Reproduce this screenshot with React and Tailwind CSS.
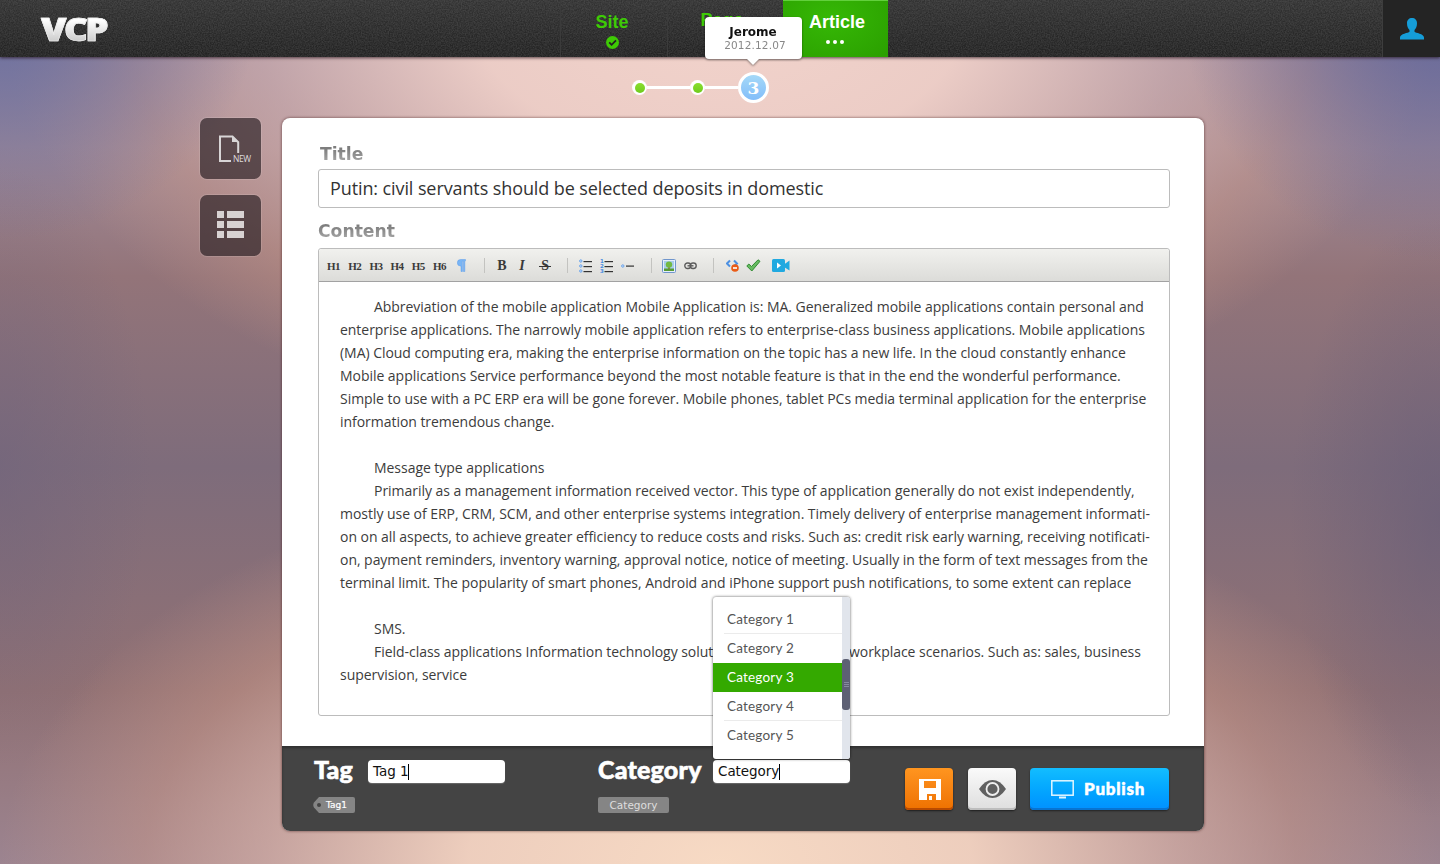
import React from "react";

const BODY = "font-['Open_Sans',sans-serif]";

const LINES = [
  [1, "Abbreviation of the mobile application Mobile Application is: MA. Generalized mobile applications contain personal and"],
  [0, "enterprise applications. The narrowly mobile application refers to enterprise-class business applications. Mobile applications"],
  [0, "(MA) Cloud computing era, making the enterprise information on the topic has a new life. In the cloud constantly enhance"],
  [0, "Mobile applications Service performance beyond the most notable feature is that in the end the wonderful performance."],
  [0, "Simple to use with a PC ERP era will be gone forever. Mobile phones, tablet PCs media terminal application for the enterprise"],
  [0, "information tremendous change."],
  [0, ""],
  [1, "Message type applications"],
  [1, "Primarily as a management information received vector. This type of application generally do not exist independently,"],
  [0, "mostly use of ERP, CRM, SCM, and other enterprise systems integration. Timely delivery of enterprise management informati-"],
  [0, "on on all aspects, to achieve greater efficiency to reduce costs and risks. Such as: credit risk early warning, receiving notificati-"],
  [0, "on, payment reminders, inventory warning, approval notice, notice of meeting. Usually in the form of text messages from the"],
  [0, "terminal limit. The popularity of smart phones, Android and iPhone support push notifications, to some extent can replace"],
  [0, ""],
  [1, "SMS."],
  [1, "Field-class applications Information technology solut", "workplace scenarios. Such as: sales, business"],
  [0, "supervision, service"],
];

function Noise() {
  return (
    <svg className="absolute inset-0 h-full w-full opacity-[0.13]" aria-hidden="true">
      <filter id="grain">
        <feTurbulence type="fractalNoise" baseFrequency="0.75" numOctaves="2" seed="4" />
        <feColorMatrix values="0 0 0 0 0.5  0 0 0 0 0.5  0 0 0 0 0.5  1.6 1.6 0 0 -1.1" />
      </filter>
      <rect width="100%" height="100%" filter="url(#grain)" />
    </svg>
  );
}

function Header() {
  return (
    <header className="relative flex h-[57px] bg-linear-to-b from-[#333333] to-[#222222] shadow-[0_1px_3px_rgba(30,10,20,0.7)]">
      <Noise />
      <div className="relative flex w-[560px] items-center pl-[41px]">
        <span className="origin-left scale-x-[1.15] bg-linear-to-b from-white from-30% to-[#cfcfcf] to-75% bg-clip-text pr-[4px] font-['Open_Sans',sans-serif] text-[32px] leading-[44px] font-extrabold tracking-[-2.2px] text-transparent [-webkit-text-stroke:0.7px_#ececec]">
          VCP
        </span>
      </div>
      <nav className="relative flex font-['Liberation_Sans',sans-serif] text-[18px] leading-[20px] font-bold text-[#3ecb05]">
        <div className="flex w-[107px] flex-col items-center border-l border-[#3b3b3b] pt-[12px] pr-[4px]">
          <span>Site</span>
          <svg className="mt-[4px]" width="13" height="13" viewBox="0 0 13 13">
            <circle cx="6.5" cy="6.5" r="6.5" fill="#3ecb05" />
            <path d="M3.2 6.4 5.6 8.8 10 4.3" fill="none" stroke="#222" strokeWidth="1.8" />
          </svg>
        </div>
        <div className="flex w-[116px] flex-col items-center border-l border-[#3b3b3b] pt-[10px] pr-[7px]">
          <span>Page</span>
        </div>
        <div className="flex w-[105px] flex-col items-center border-t border-[#62d03c] bg-[radial-gradient(ellipse_at_45%_30%,#36b806,#2ba000_95%)] pt-[11px] text-white">
          <span className="pl-[3px]">Article</span>
          <div className="mt-[8px] flex gap-[3px] pr-px">
            <i className="size-[4px] rounded-full bg-white" />
            <i className="size-[4px] rounded-full bg-white" />
            <i className="size-[4px] rounded-full bg-white" />
          </div>
        </div>
      </nav>
      <div className="relative ml-auto flex w-[58px] justify-center border-l border-[#3d3d3d] bg-[#242424] pt-[18px]">
        <svg width="24" height="22" viewBox="0 0 24 22" fill="#159dd8">
          <path d="M12 0c3 0 5 2 5 5.200 0 3.200-1 5.400-2.500 6.800v1.800c1 1.200 9.500 2 9.500 5.700V21.500H0V19.500c0-3.700 8.500-4.500 9.500-5.700V12C8 10.600 7 8.400 7 5.200 7 2 9 0 12 0Z" />
        </svg>
      </div>
    </header>
  );
}

function Dot() {
  return (
    <span className="flex size-[15px] items-center justify-center rounded-full bg-white">
      <i className="size-[10px] rounded-full bg-linear-to-b from-[#8ade30] to-[#6fcb1c]" />
    </span>
  );
}

function Stepper() {
  return (
    <div className="flex h-[61px] items-start pt-[15px] pl-[632px]">
      <div className="flex h-[31px] items-center">
        <Dot />
        <i className="h-[3px] w-[43px] bg-white" />
        <Dot />
        <i className="h-[3px] w-[33px] bg-white" />
        <div className="relative flex size-[31px] items-center justify-center rounded-full border-3 border-white bg-linear-to-b from-[#a5d9f8] to-[#83bdf9] font-['DejaVu_Serif',serif] text-[17px] leading-[20px] font-bold text-white">
          3
          <div className="absolute -top-[58px] -left-[36px] z-10 flex h-[42px] w-[97px] flex-col items-center rounded-[4px] bg-white pt-[8px] pl-[3px] font-['DejaVu_Sans',sans-serif] drop-shadow-[0_1px_1px_rgba(0,0,0,0.45)]">
            <b className="pr-[4px] text-[12px] leading-[15px] text-[#111]">Jerome</b>
            <span className="text-[10.500px] leading-[11px] font-normal tracking-[0.150px] text-[#888]">2012.12.07</span>
            <svg className="absolute top-[41px] left-[41px]" width="14" height="8" viewBox="0 0 14 8">
              <path d="M0 0h14L7 7Z" fill="white" />
            </svg>
          </div>
        </div>
      </div>
    </div>
  );
}

function SideButton({ children }) {
  return (
    <button className="flex size-[61px] items-start justify-start rounded-[7px] bg-[#271d22]/65 shadow-[0_0_0_1px_rgba(255,255,255,0.12)]">
      {children}
    </button>
  );
}

function SideBar() {
  return (
    <aside className="flex w-[61px] flex-col gap-[16px]">
      <SideButton>
        <svg width="61" height="61" viewBox="0 0 61 61">
          <path d="M31 43H20V18.500h12.500l5.700 5.700V35" fill="none" stroke="#d8d5d6" strokeWidth="2" />
          <path d="M32 18v6h6.500Z" fill="#d8d5d6" />
          <text x="33" y="44" fontFamily="Open Sans" fontSize="8.500" fill="#dedbdc" textLength="18">NEW</text>
        </svg>
      </SideButton>
      <SideButton>
        <svg width="61" height="61" viewBox="0 0 61 61" fill="#d8d2d2">
          {[16, 26, 36].map((y) => (
            <g key={y}>
              <rect x="17" y={y} width="7" height="7" />
              <rect x="27" y={y} width="17" height="7" />
            </g>
          ))}
        </svg>
      </SideButton>
    </aside>
  );
}

function Sep({ className }) {
  return <i className={`h-[15px] w-px bg-[#c3c3c0] ${className}`} />;
}

function Toolbar() {
  return (
    <div className="flex h-[33px] items-center rounded-t-[3px] border-b border-[#a2a2a2] bg-linear-to-b from-[#f1f1ee] to-[#dcdcd9] pt-px pl-[8px] font-['Liberation_Serif',serif] font-bold text-[#3a3a3a]">
      {["H1", "H2", "H3", "H4", "H5", "H6"].map((h) => (
        <span key={h} className="w-[21.200px] text-[11px] leading-[14px] tracking-[-0.5px]">{h}</span>
      ))}
      <svg className="ml-[3px]" width="9" height="13" viewBox="0 0 9 13">
        <path d="M8.500.5H3.600A3.200 3.200 0 0 0 3.600 7H4v5.500h1.400V2h1v10.500h1.400V1.800h.7Z" fill="#79b5f5" stroke="#5a9cec" strokeWidth=".5" />
      </svg>
      <Sep className="ml-[18px]" />
      <span className="ml-[12px] w-[22px] text-[14px] leading-[16px]">B</span>
      <span className="w-[20px] text-[14px] leading-[16px] italic">I</span>
      <span className="relative ml-[2px] w-[10px] text-[14px] leading-[16px]">
        S
        <i className="absolute top-[8px] -left-[2px] h-px w-[12px] bg-[#333]" />
      </span>
      <Sep className="ml-[16px]" />
      <svg className="ml-[11px]" width="13" height="14" viewBox="0 0 13 14">
        {[2, 7, 12].map((y) => (
          <g key={y}>
            <circle cx="1.800" cy={y} r="1.200" fill="#cfe2fb" stroke="#6ba3e8" />
            <rect x="4.500" y={y} width="8.500" height="1.200" fill="#333" />
          </g>
        ))}
      </svg>
      <svg className="ml-[8px]" width="13" height="14" viewBox="0 0 13 14">
        {[[2, "1"], [7, "2"], [12, "3"]].map(([y, n]) => (
          <g key={n}>
            <text x="0" y={y + 2} fontSize="5.500" fontFamily="DejaVu Sans" fill="#4a8de0">{n}</text>
            <rect x="4.500" y={y} width="8.500" height="1.200" fill="#333" />
          </g>
        ))}
      </svg>
      <svg className="ml-[8px]" width="13" height="4" viewBox="0 0 13 4">
        <circle cx="1.800" cy="2" r="1.200" fill="#cfe2fb" stroke="#6ba3e8" />
        <rect x="5" y="1.500" width="8" height="1.200" fill="#333" />
      </svg>
      <Sep className="ml-[17px]" />
      <svg className="ml-[10px]" width="14" height="14" viewBox="0 0 14 14">
        <rect x=".5" y=".5" width="13" height="13" rx="1" fill="#e5eefc" stroke="#7096cc" />
        <rect x="2" y="2" width="10" height="10" fill="#a8cdea" />
        <rect x="2" y="9.500" width="10" height="2.500" fill="#579b35" />
        <path d="M6.300 8h1.400v2H6.300Z" fill="#8b6b2a" />
        <circle cx="7" cy="5.600" r="3.200" fill="#72b942" />
      </svg>
      <svg className="ml-[8px]" width="13" height="8" viewBox="0 0 13 8" fill="none" stroke="#5c5c5c" strokeWidth="1.400">
        <rect x=".8" y="1" width="6" height="5.500" rx="2.700" />
        <rect x="6.200" y="1" width="6" height="5.500" rx="2.700" />
        <path d="M3.500 3.800h6" />
      </svg>
      <Sep className="ml-[16px]" />
      <svg className="ml-[12px]" width="13" height="13" viewBox="0 0 13 13">
        <path d="M4 1.500 1 4.500 4 7.500M8 1.500 11 4.500 8 7.500" fill="none" stroke="#4c90e2" strokeWidth="2" />
        <circle cx="9" cy="9" r="3.800" fill="#ea5c17" />
        <rect x="7" y="8.200" width="4" height="1.600" fill="white" />
      </svg>
      <svg className="ml-[7px]" width="15" height="13" viewBox="0 0 15 13">
        <path d="m.8 7 2-2L5.500 7.500 12 .8l2 1.500L5.800 12Z" fill="#67bb61" stroke="#2f8b31" />
      </svg>
      <svg className="ml-[11px]" width="18" height="13" viewBox="0 0 18 13">
        <rect y="0" width="13" height="13" rx="1.500" fill="#20a9e0" />
        <path d="M12 5.500 17.500 1.500v10L12 8Z" fill="#20a9e0" />
        <path d="M5 3.500v6L9 6.500Z" fill="white" />
      </svg>
    </div>
  );
}

function Label({ children, className }) {
  return (
    <h2 className={`bg-linear-to-b from-[#7d7d7d] from-25% to-[#b0b0b0] to-100% bg-clip-text font-['DejaVu_Sans',sans-serif] text-[17.200px] leading-[22px] font-bold text-transparent ${className}`}>
      {children}
    </h2>
  );
}

function Dropdown() {
  return (
    <div className="absolute bottom-[24px] left-0 flex h-[162px] w-[137px] justify-between overflow-hidden rounded-[3px] bg-white shadow-[0_0_3px_rgba(0,0,0,0.65)]">
      <ul className="w-[129px] pt-[8px] font-['Lato',sans-serif] text-[13.500px] leading-[28px] text-[#555]">
        {[1, 2, 3, 4, 5].map((n) => (
          <li key={n} className={n === 3 ? "h-[29px] bg-[#34a900] pl-[14px] text-white" : "h-[29px] pl-[11px]"}>
            <div className={n === 1 || n === 4 ? "h-[29px] border-b border-[#ebebeb] pl-[3px]" : n === 3 ? "" : "pl-[3px]"}>
              <span className="inline-block tracking-[0.200px]">Category {n}</span>
            </div>
          </li>
        ))}
      </ul>
      <div className="w-[8px] bg-[#e1e5ec] pt-[62px]">
        <div className="flex h-[51px] flex-col items-center justify-center gap-px rounded-[3px] bg-[#5d6074]">
          <i className="h-px w-[5px] bg-[#8689a0]" />
          <i className="h-px w-[5px] bg-[#8689a0]" />
          <i className="h-px w-[5px] bg-[#8689a0]" />
        </div>
      </div>
    </div>
  );
}

function Field({ value, children }) {
  return (
    <div className="relative flex h-[23px] w-[137px] items-center rounded-[4px] bg-white pl-[5px] font-['DejaVu_Sans',sans-serif] text-[13.500px] text-[#111] shadow-[0_1px_1px_rgba(255,255,255,0.2)]">
      <span className="tracking-[-0.050px]">{value}</span>
      <i className="h-[16px] w-px bg-black" />
      {children}
    </div>
  );
}

const HEADING = "font-['Lato',sans-serif] text-[25px] leading-[28px] font-black tracking-[0.200px] text-white [-webkit-text-stroke:0.6px_white]";

function Footer() {
  return (
    <footer className="flex h-[85px] rounded-b-[8px] bg-[#444444] pl-[32px] shadow-[inset_0_2px_3px_rgba(0,0,0,0.3)]">
      <div className="flex w-[284px] flex-col pt-[9px]">
        <div className="flex">
          <h3 className={`w-[54px] ${HEADING}`}>Tag</h3>
          <div className="pt-[5px]"><Field value="Tag 1" /></div>
        </div>
        <div className="relative mt-[14px] -ml-px flex h-[16px] w-[42px]">
          <svg className="absolute inset-0" width="42" height="16" viewBox="0 0 42 16">
            <path d="M6 0H40a2 2 0 0 1 2 2V14a2 2 0 0 1-2 2H6L1 10.500Q-.5 8 1 5.500Z" fill="#858585" />
            <circle cx="6" cy="8" r="2" fill="#444" />
          </svg>
          <span className="relative pl-[13px] font-['DejaVu_Sans',sans-serif] text-[9px] leading-[16px] text-white [-webkit-text-stroke:0.2px_white]">Tag1</span>
        </div>
      </div>
      <div className="flex w-[307px] flex-col pt-[9px]">
        <div className="flex">
          <h3 className={`w-[115px] ${HEADING}`}>Category</h3>
          <div className="pt-[5px]"><Field value="Category"><Dropdown /></Field></div>
        </div>
        <span className="mt-[14px] h-[16px] w-[71px] rounded-[2px] bg-[#858585] text-center font-['DejaVu_Sans',sans-serif] text-[10.500px] leading-[16px] text-[#dedede]">Category</span>
      </div>
      <div className="flex items-start pt-[22px]">
        <button className="flex h-[42px] w-[48px] items-center justify-center rounded-[4px] bg-linear-to-b from-[#ff951f] to-[#ee7100] shadow-[inset_0_-2px_0_#b94a00,0_1px_2px_rgba(0,0,0,0.6)]">
          <svg className="ml-[2px]" width="22" height="21" viewBox="0 0 22 21">
            <path fillRule="evenodd" fill="white" d="M0 0H22V21H17V15H14V21H9V15H8v6H0V0ZM5 2V9H17V2ZM9 15h5v6H9Z" />
            <path fill="white" d="M10 17h3v4h-3Z" opacity=".95" />
          </svg>
        </button>
        <button className="ml-[15px] flex h-[42px] w-[48px] items-center justify-center rounded-[4px] bg-linear-to-b from-[#fafafa] to-[#dedede] shadow-[inset_0_-2px_0_#bdbdbd,0_1px_2px_rgba(0,0,0,0.6)]">
          <svg className="-mt-px" width="27" height="18" viewBox="0 0 27 18">
            <path d="M0 9Q6 0 13.500 0T27 9Q21 18 13.500 18T0 9Z" fill="#606060" />
            <circle cx="13.500" cy="9" r="6" fill="none" stroke="#eee" strokeWidth="1.800" />
          </svg>
        </button>
        <button className="ml-[14px] flex h-[42px] w-[139px] items-center rounded-[4px] bg-linear-to-b from-[#13bdff] to-[#0290ff] pl-[21px] shadow-[inset_0_-2px_0_#0874d2,0_1px_2px_rgba(0,0,0,0.5)]">
          <svg width="23" height="19" viewBox="0 0 23 19">
            <rect x=".8" y=".8" width="21.400" height="14.400" fill="none" stroke="#e4f6ff" strokeWidth="1.500" />
            <path d="M8 17.500h7" stroke="#e4f6ff" strokeWidth="2" />
          </svg>
          <span className="ml-[10px] font-['Lato',sans-serif] text-[17px] leading-[22px] font-black tracking-[0.750px] text-white [-webkit-text-stroke:0.5px_white]">Publish</span>
        </button>
      </div>
    </footer>
  );
}

export default function App() {
  return (
    <div className="h-[864px] w-[1440px] overflow-hidden bg-[radial-gradient(ellipse_260px_240px_at_0%_0%,rgba(102,108,158,0.95)_0%,rgba(108,112,158,0)_100%),radial-gradient(ellipse_260px_260px_at_100%_0%,rgba(96,100,152,0.95)_0%,rgba(108,112,158,0)_100%),radial-gradient(ellipse_150px_300px_at_0%_54%,rgba(112,100,124,0.6)_0%,rgba(112,100,124,0)_100%),radial-gradient(ellipse_150px_300px_at_100%_60%,rgba(104,94,120,0.7)_0%,rgba(104,94,120,0)_100%),radial-gradient(ellipse_720px_450px_at_50%_0%,#f3d4cc_0%,rgba(240,208,200,0.95)_35%,rgba(218,180,174,0.6)_65%,rgba(208,156,138,0.42)_83%,rgba(170,110,110,0)_100%),radial-gradient(ellipse_720px_400px_at_50%_100%,#f7dac4_0%,rgba(242,210,192,0.95)_35%,rgba(220,180,168,0.65)_63%,rgba(208,156,138,0.42)_80%,rgba(170,110,110,0)_100%),linear-gradient(180deg,#9088a8_0%,#a08a98_17%,#937479_32%,#7e6c7b_54%,#917174_80%,#9c8490_100%)]">
      <Header />
      <Stepper />
      <div className="flex gap-[21px] pl-[200px]">
        <SideBar />
        <main className="h-[713px] w-[922px] rounded-[8px] bg-white shadow-[0_0_3px_rgba(50,10,10,0.65)]">
          <div className="flex h-[628px] flex-col pt-[25px] pr-[34px] pl-[36px]">
            <Label className="pl-[2px]">Title</Label>
            <div className={`mt-[4px] h-[39px] rounded-[3px] border border-[#bcbcbc] pl-[11px] text-[18px] leading-[37px] tracking-[-0.100px] text-[#333] ${BODY}`}>
              Putin: civil servants should be selected deposits in domestic
            </div>
            <Label className="mt-[12px] mb-[6px]">Content</Label>
            <div className="h-[468px] rounded-[3px] border border-[#bcbcbc]">
              <Toolbar />
              <div className={`pt-[13px] pl-[21px] text-[14px] leading-[23px] tracking-[-0.040px] whitespace-nowrap text-[#3c3c3c] ${BODY}`}>
                {LINES.map(([indent, text, rest], i) => (
                  <p key={i} className={indent ? "flex h-[23px] pl-[34px]" : "h-[23px]"}>
                    {rest ? <span className="w-[475px]">{text}</span> : text}
                    {rest && <span>{rest}</span>}
                  </p>
                ))}
              </div>
            </div>
          </div>
          <Footer />
        </main>
      </div>
    </div>
  );
}
